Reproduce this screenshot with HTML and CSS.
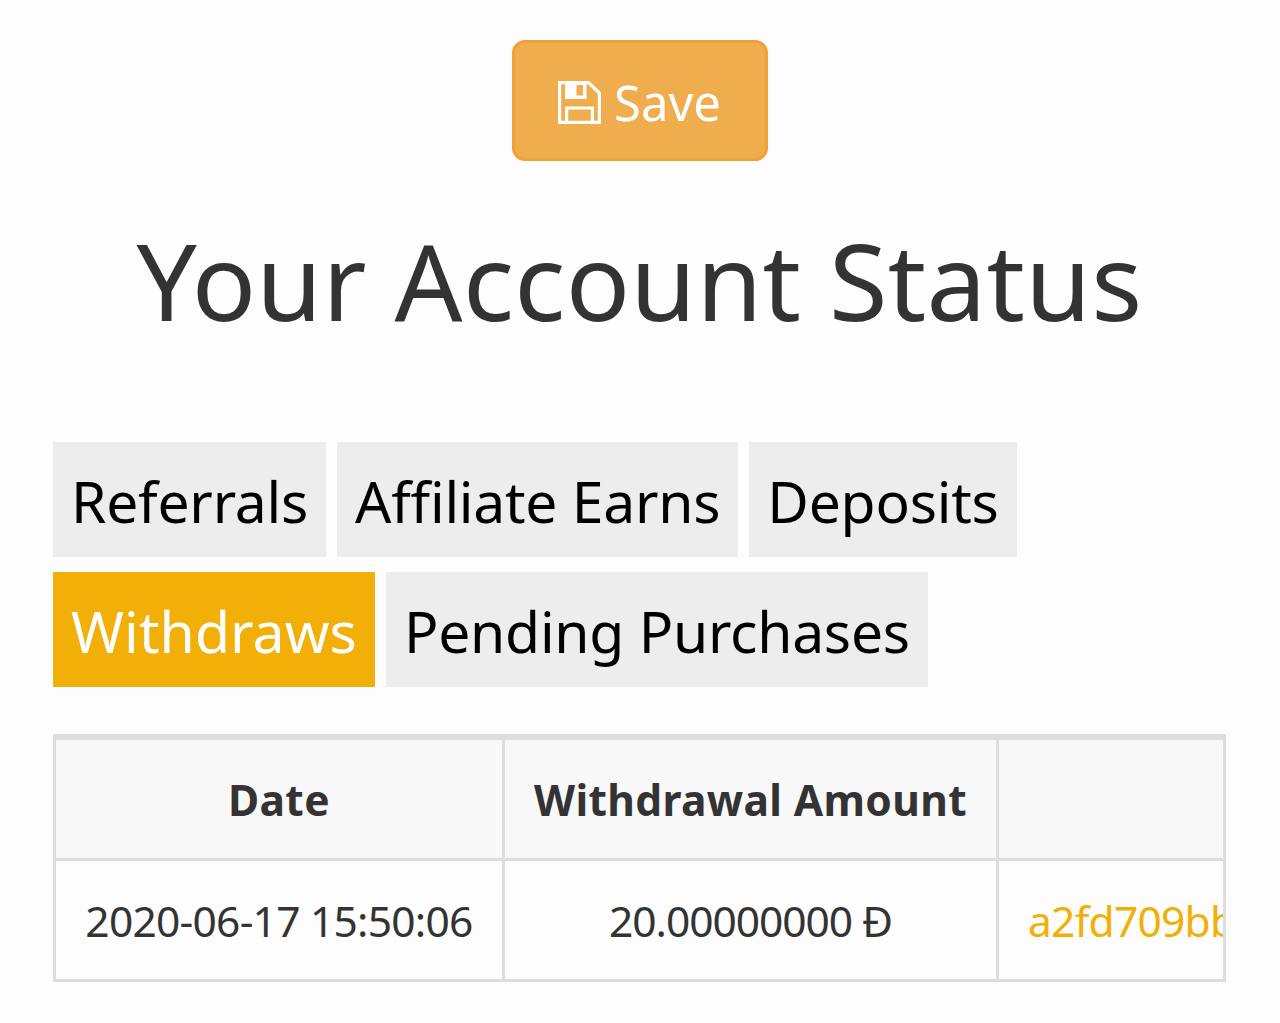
FILE: index.html
```
<!DOCTYPE html>
<html lang="en">
<head>
    <meta charset="UTF-8">
    <meta name="viewport" content="width=device-width, initial-scale=1.0">
    <title>Your Account Status</title>
    <link rel="stylesheet" href="styles.css">
</head>
<body>

<div class="account">
    <button type="button" class="btn-save">
        <svg class="icon-save" viewBox="0 0 43 43" aria-hidden="true">
            <path d="M1.6 1.6H30.5L41.4 12V41.4H1.6Z" fill="none" stroke="#fff" stroke-width="3.2"/>
            <path d="M7 1H28.5V18H7ZM18.5 4V14.5H25V4Z" fill="#fff" fill-rule="evenodd"/>
            <path d="M8.6 41V27H34.4V41" fill="none" stroke="#fff" stroke-width="3.2"/>
        </svg>
        <span>Save</span>
    </button>

    <h1>Your Account Status</h1>

    <ul class="tabs">
        <li><a href="#">Referrals</a></li>
        <li><a href="#">Affiliate Earns</a></li>
        <li><a href="#">Deposits</a></li>
        <li class="active"><a href="#">Withdraws</a></li>
        <li><a href="#">Pending Purchases</a></li>
    </ul>

    <div class="table-wrap">
        <table>
            <thead>
                <tr>
                    <th class="col-date">Date</th>
                    <th class="col-amount">Withdrawal Amount</th>
                    <th class="col-tx"></th>
                </tr>
            </thead>
            <tbody>
                <tr>
                    <td>2020-06-17 15:50:06</td>
                    <td class="amount">20.00000000 Đ</td>
                    <td class="tx"><a href="#">a2fd709bb</a></td>
                </tr>
            </tbody>
        </table>
    </div>
</div>

</body>
</html>
```

FILE: styles.css
```
* {
    box-sizing: border-box;
}

body {
    margin: 0;
    background-color: #fdfdfd;
    color: #333;
    font-family: "Noto Sans", sans-serif;
    overflow: hidden;
}

.account {
    display: flex;
    flex-direction: column;
    padding: 40px 54px 0 53px;
}

.btn-save {
    display: flex;
    align-items: center;
    justify-content: center;
    gap: 13px;
    align-self: center;
    width: 256px;
    height: 121px;
    padding: 3px 0 0;
    background-color: #f0ad4e;
    color: #fff;
    border: 3px solid #eea236;
    border-radius: 13px;
    font-family: inherit;
    font-size: 49px;
    cursor: pointer;
}

.icon-save {
    width: 43px;
    height: 43px;
}

h1 {
    margin: 47px 0 0;
    font-size: 106.5px;
    font-weight: 400;
    line-height: 144px;
    letter-spacing: 0.25px;
    text-align: center;
    white-space: nowrap;
}

.tabs {
    display: flex;
    flex-wrap: wrap;
    gap: 15px 11px;
    margin: 90px 0 0;
    padding: 0;
    list-style: none;
}

.tabs a {
    display: block;
    height: 115px;
    padding: 2px 18px 0;
    background-color: #ededed;
    color: #000;
    font-size: 57px;
    line-height: 115px;
    letter-spacing: -0.25px;
    text-decoration: none;
}

.tabs .active a {
    background-color: #f2af07;
    color: #fff;
    letter-spacing: 0.1px;
}

.table-wrap {
    margin-top: 47px;
    height: 248px;
    border: 3px solid #ddd;
    border-top-width: 6px;
    overflow: hidden;
}

table {
    width: 1500px;
    table-layout: fixed;
    border-collapse: separate;
    border-spacing: 0;
    font-size: 42.5px;
    text-align: center;
}

th, td {
    height: 118px;
    padding: 0;
    border-right: 3px solid #ddd;
    white-space: nowrap;
}

th {
    height: 121px;
    background-color: #f8f8f8;
    border-bottom: 3px solid #ddd;
    letter-spacing: 0.35px;
}

td {
    letter-spacing: -0.75px;
}

.col-date {
    width: 449px;
}

.col-amount {
    width: 494px;
}

.amount {
    letter-spacing: -1.05px;
}

.tx {
    padding-left: 29px;
    text-align: left;
}

.tx a {
    color: #f2af07;
    text-decoration: none;
}
```
